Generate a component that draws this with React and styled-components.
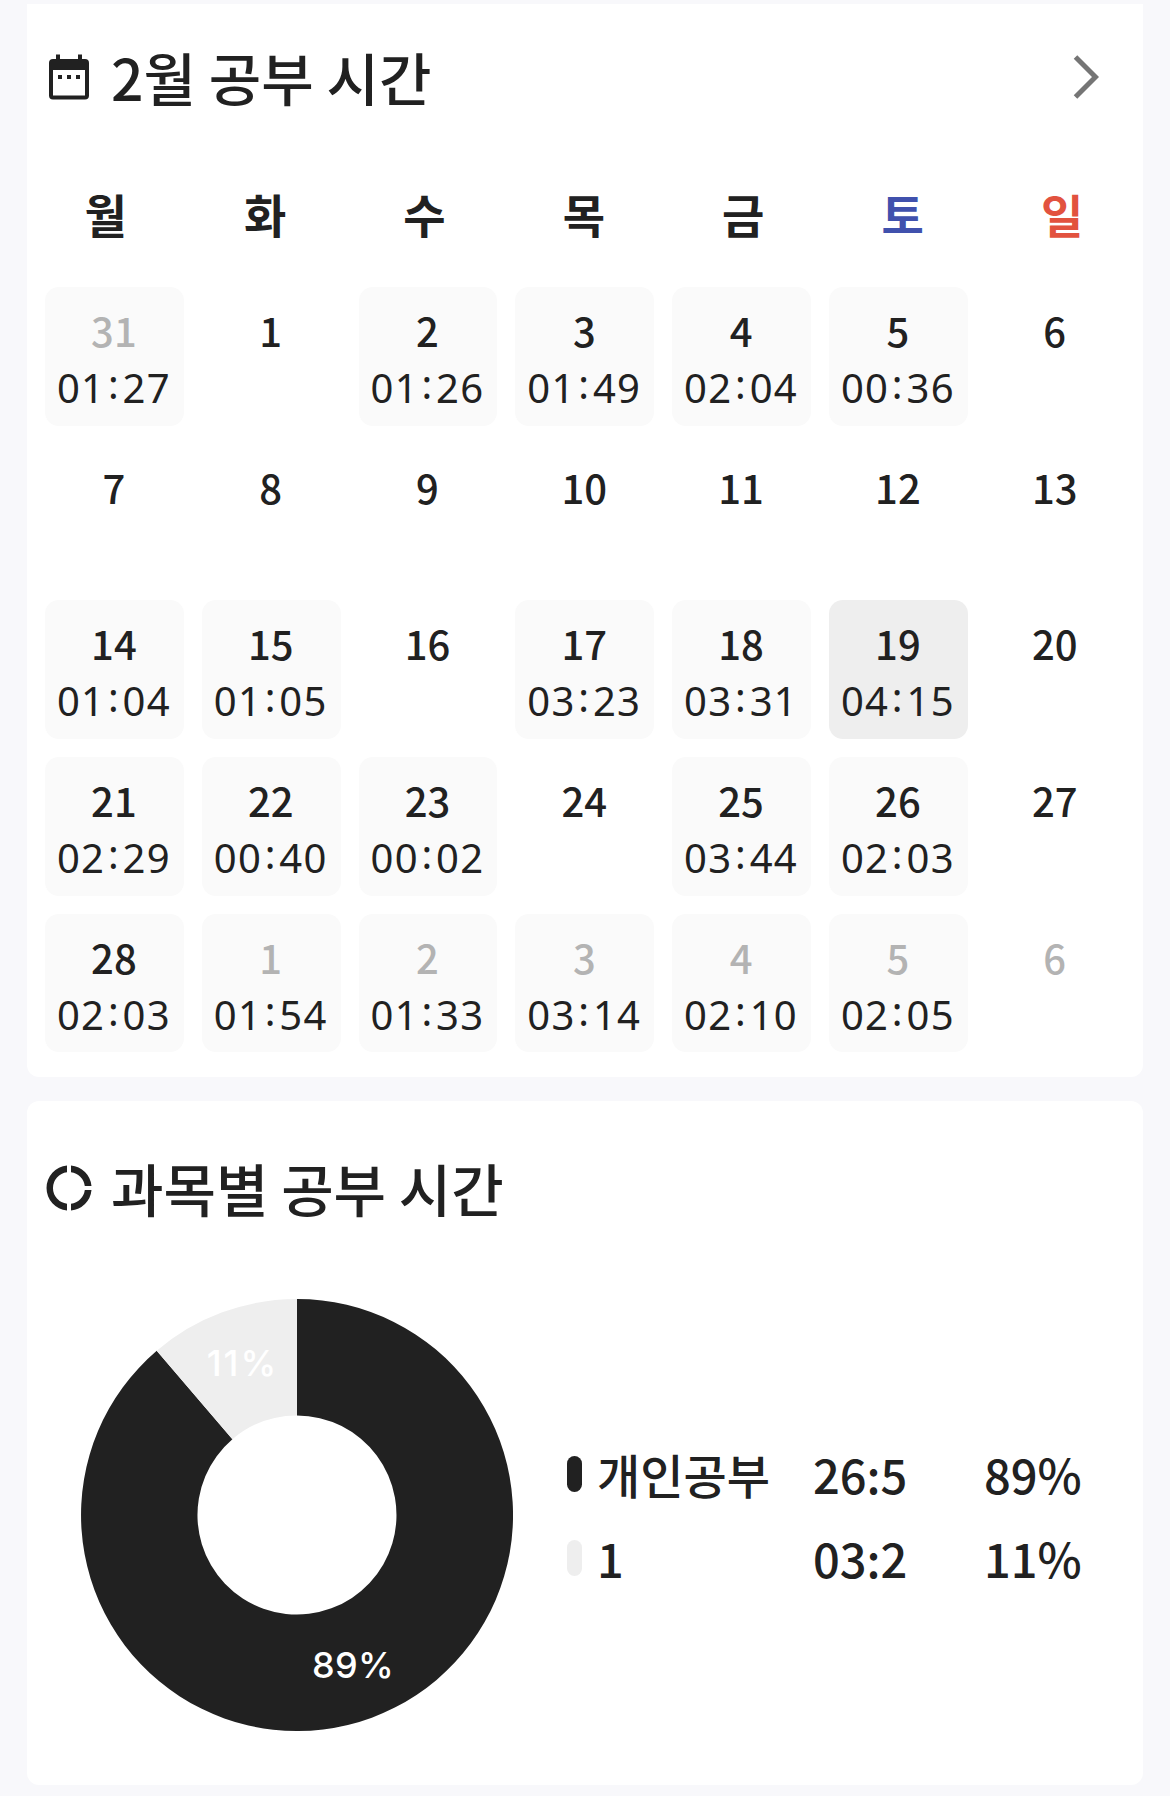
import React from "react";
import styled, { createGlobalStyle } from "styled-components";

const GlobalStyle = createGlobalStyle`
  * {
    box-sizing: border-box;
  }
  body {
    margin: 0;
    background: #f8f8fb;
    color: #212121;
    font-family: "Noto Sans CJK KR", sans-serif;
  }
`;

const Page = styled.main`
  display: flex;
  flex-direction: column;
  gap: 24px;
  width: 1170px;
  height: 1796px;
  padding: 4px 27px 0;
  overflow: hidden;
`;

const Card = styled.section`
  height: ${(props) => props.$height}px;
  padding: 0 18px;
  background: #fff;
  border-radius: ${(props) => (props.$flatTop ? "0 0 12px 12px" : "12px")};
`;

const Header = styled.header`
  display: flex;
  align-items: center;
  height: ${(props) => props.$height}px;
`;

const Title = styled.h2`
  flex: 1;
  margin: 0 0 2px 18px;
  font-size: 57px;
  font-weight: 500;
  line-height: 80px;
`;

const HeaderIcon = styled.svg`
  width: 48px;
  height: 48px;
  flex: none;
`;

const ArrowIcon = styled.svg`
  width: 26px;
  height: 46px;
  margin-right: 26px;
`;

const Weekdays = styled.div`
  display: grid;
  grid-template-columns: repeat(7, 159.4px);
  width: 1116px;
  margin-left: -19px;
`;

const Weekday = styled.div`
  height: 124px;
  line-height: 126px;
  text-align: center;
  font-size: 46px;
  font-weight: 700;
  color: ${(props) => props.$color || "#212121"};
`;

const Days = styled.div`
  display: grid;
  grid-template-columns: repeat(7, 138.8px);
  grid-auto-rows: 138.7px;
  gap: 18px;
  margin-top: 13px;
`;

const Day = styled.div`
  padding: 23px 1px 0 0;
  text-align: center;
  border-radius: 14px;
  background: ${(props) =>
    props.$best ? "#eeeeee" : props.$studied ? "#fafafa" : "transparent"};
`;

const DayNumber = styled.div`
  height: 40px;
  line-height: 40px;
  font-size: 40px;
  font-weight: 500;
  color: ${(props) => (props.$muted ? "#b3b3b3" : "#212121")};
`;

const DayTime = styled.div`
  height: 40px;
  margin: 18px -4px 0;
  line-height: 40px;
  font-family: "Noto Sans", sans-serif;
  font-size: 40px;
  letter-spacing: 1.3px;
  white-space: nowrap;
`;

const Colon = styled.span`
  margin: 0 2.6px;
  vertical-align: 4px;
  line-height: 0;
`;

const ChartRow = styled.div`
  display: flex;
  align-items: center;
  margin-top: 24px;
`;

const Donut = styled.svg`
  width: 432px;
  height: 432px;
  margin-left: 36px;
`;

const DonutLabel = styled.text`
  fill: #fff;
  font-family: Inter, sans-serif;
  font-size: 36px;
  font-weight: 500;
  letter-spacing: ${(props) => props.$spacing}px;
  text-anchor: middle;
`;

const Legend = styled.div`
  display: flex;
  flex-direction: column;
  margin-left: 54px;
`;

const LegendRow = styled.div`
  display: grid;
  grid-template-columns: 30px 216px 171px 110px;
  align-items: center;
  height: 84px;
  font-size: 47px;
  font-weight: 500;
  line-height: 84px;
`;

const Swatch = styled.span`
  width: 15px;
  height: 36px;
  border-radius: 8px;
  background: ${(props) => props.$color};
`;

const LegendText = styled.span`
  padding-top: 1px;
`;

const weekdays = [
  ["월"],
  ["화"],
  ["수"],
  ["목"],
  ["금"],
  ["토", "#4051ad"],
  ["일", "#e2523f"],
];

const times = [
  "01:27", "", "01:26", "01:49", "02:04", "00:36", "",
  "", "", "", "", "", "", "",
  "01:04", "01:05", "", "03:23", "03:31", "04:15", "",
  "02:29", "00:40", "00:02", "", "03:44", "02:03", "",
  "02:03", "01:54", "01:33", "03:14", "02:10", "02:05", "",
];

const days = times.map((time, i) => ({
  time,
  number: i === 0 ? 31 : i > 28 ? i - 28 : i,
  muted: i === 0 || i > 28,
}));

const subjects = [
  { name: "개인공부", time: "26:5", percent: "89%", color: "#212121" },
  { name: "1", time: "03:2", percent: "11%", color: "#eeeeee" },
];

function CalendarIcon() {
  return (
    <HeaderIcon viewBox="0 0 48 48">
      <path
        fill="#212121"
        fillRule="evenodd"
        d="M11 1.5h4V6h18V1.5h4V6h3a4 4 0 0 1 4 4v32.500a4 4 0 0 1-4 4H8a4 4 0 0 1-4-4V10a4 4 0 0 1 4-4h3zM8 17v25.500h32V17z"
      />
      <path fill="#212121" d="M13 22h4v4h-4zM22 22h4v4h-4zM31 22h4v4h-4z" />
    </HeaderIcon>
  );
}

function RingIcon() {
  return (
    <HeaderIcon viewBox="0 0 48 48">
      <path
        fill="#212121"
        d="M22 1.500v6.800a15.800 15.800 0 0 0 0 31.400v6.800a22.600 22.600 0 0 1 0-45zM26 1.500a22.600 22.600 0 0 1 20.500 20.500h-6.700A15.800 15.800 0 0 0 26 8.300zM46.500 26A22.600 22.600 0 0 1 26 46.500v-6.800A15.800 15.800 0 0 0 39.800 26z"
      />
    </HeaderIcon>
  );
}

function StudyCalendar() {
  return (
    <Card $height={1073} $flatTop>
      <Header $height={146}>
        <CalendarIcon />
        <Title>2월 공부 시간</Title>
        <ArrowIcon viewBox="0 0 26 46">
          <path d="M2.500 3 22.500 23l-20 20" fill="none" stroke="#757575" strokeWidth="5" />
        </ArrowIcon>
      </Header>
      <Weekdays>
        {weekdays.map(([label, color]) => (
          <Weekday key={label} $color={color}>
            {label}
          </Weekday>
        ))}
      </Weekdays>
      <Days>
        {days.map((day, i) => (
          <Day key={i} $studied={!!day.time} $best={day.time === "04:15"}>
            <DayNumber $muted={day.muted}>{day.number}</DayNumber>
            {day.time && (
              <DayTime>
                {day.time.slice(0, 2)}
                <Colon>:</Colon>
                {day.time.slice(3)}
              </DayTime>
            )}
          </Day>
        ))}
      </Days>
    </Card>
  );
}

function SubjectChart() {
  return (
    <Card $height={684}>
      <Header $height={174}>
        <RingIcon />
        <Title>과목별 공부 시간</Title>
      </Header>
      <ChartRow>
        <Donut viewBox="0 0 432 432">
          <path fill="#212121" d="M216 0A216 216 0 1 1 75.700 51.800L151.400 140.300A99.500 99.500 0 1 0 216 116.500z" />
          <path fill="#eeeeee" d="M216 0A216 216 0 0 0 75.700 51.800L151.400 140.300A99.500 99.500 0 0 1 216 116.500z" />
          <DonutLabel x="161.500" y="77" $spacing={2}>
            11%
          </DonutLabel>
          <DonutLabel x="272" y="379" $spacing={0.3}>
            89%
          </DonutLabel>
        </Donut>
        <Legend>
          {subjects.map((subject) => (
            <LegendRow key={subject.name}>
              <Swatch $color={subject.color} />
              <LegendText>{subject.name}</LegendText>
              <LegendText>{subject.time}</LegendText>
              <LegendText>{subject.percent}</LegendText>
            </LegendRow>
          ))}
        </Legend>
      </ChartRow>
    </Card>
  );
}

export default function App() {
  return (
    <Page>
      <GlobalStyle />
      <StudyCalendar />
      <SubjectChart />
    </Page>
  );
}
